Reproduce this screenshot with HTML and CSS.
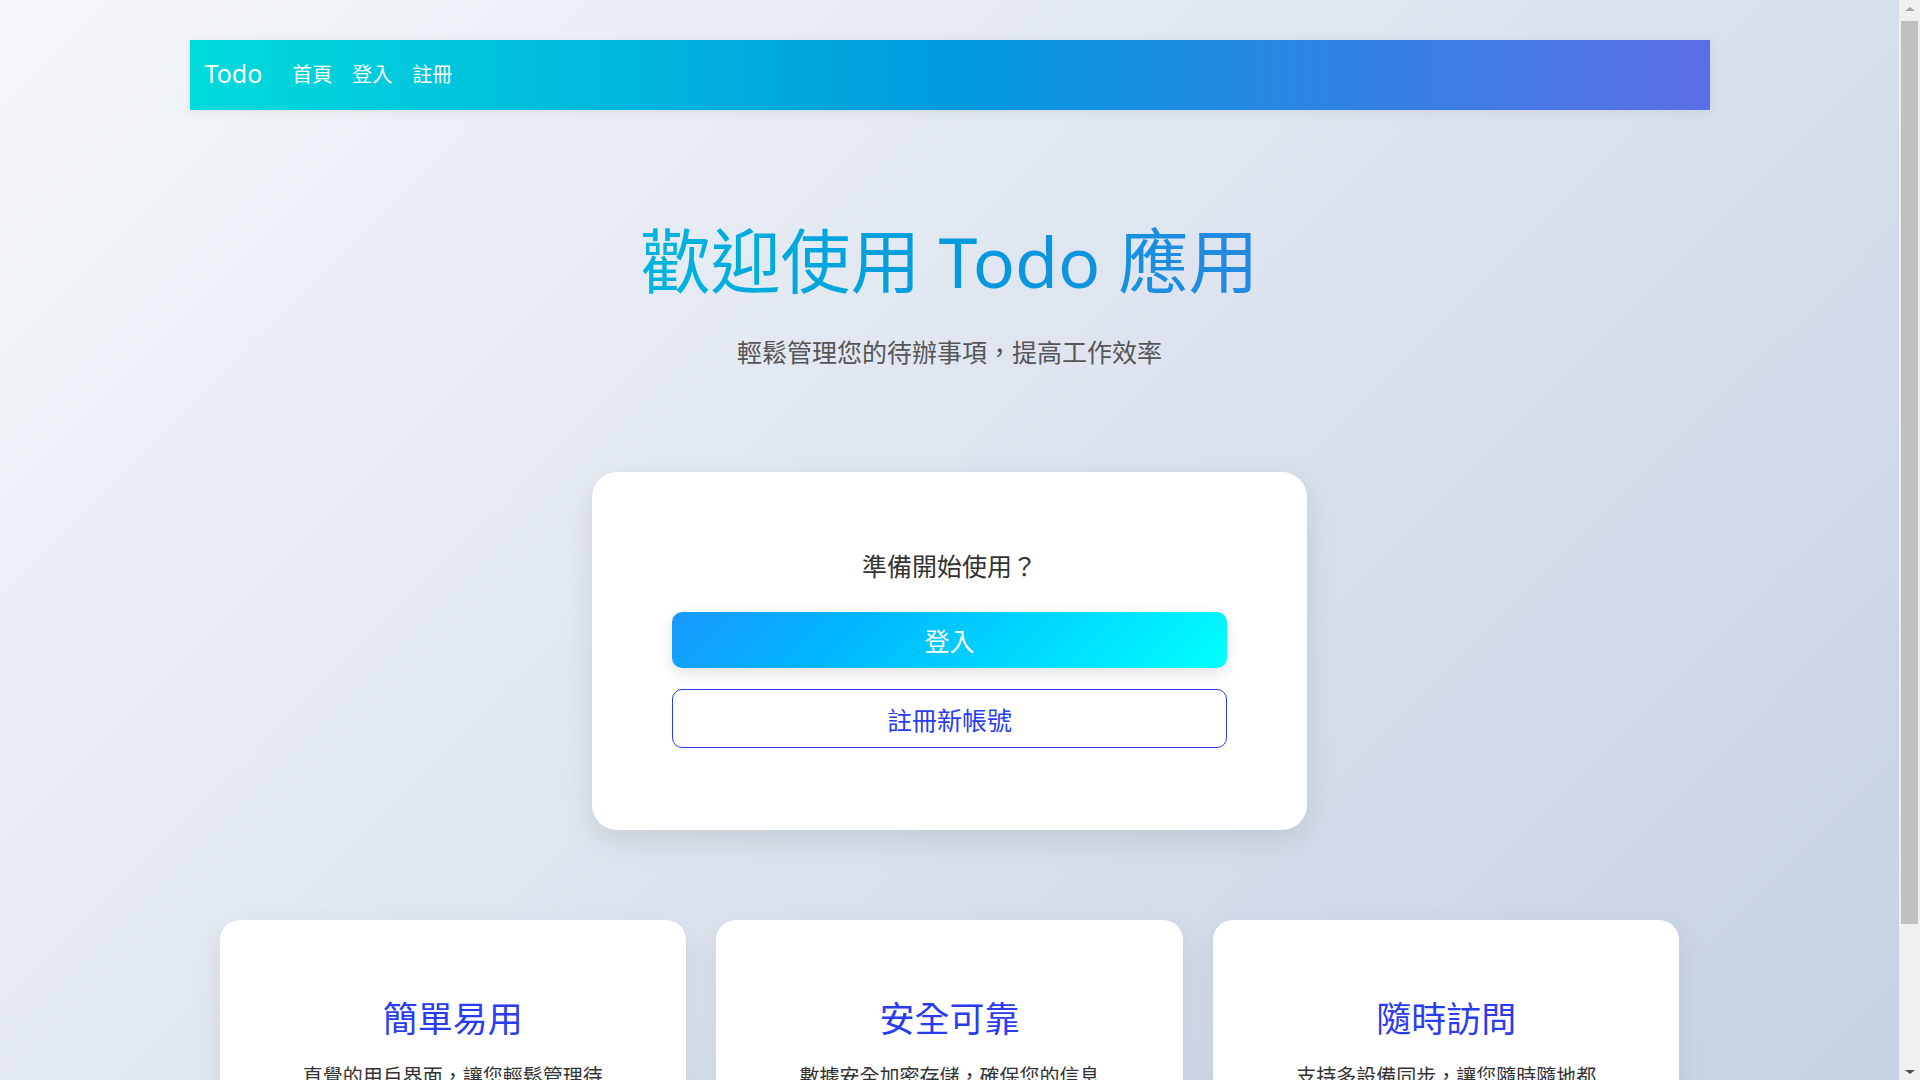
FILE: index.html
```html
<!DOCTYPE html>
<html lang="zh-Hant">
<head>
<meta charset="utf-8">
<title>Todo</title>
<link rel="stylesheet" href="styles.css">
</head>
<body>
<div class="container">
  <nav class="navbar">
    <a class="brand" href="#">Todo</a>
    <a class="nav-link" href="#">首頁</a>
    <a class="nav-link" href="#">登入</a>
    <a class="nav-link" href="#">註冊</a>
  </nav>

  <section class="hero">
    <h1 class="hero-title">歡迎使用 Todo 應用</h1>
    <p class="hero-lead">輕鬆管理您的待辦事項，提高工作效率</p>
  </section>

  <section class="cta-card">
    <p class="cta-text">準備開始使用？</p>
    <a class="btn btn-primary" href="#">登入</a>
    <a class="btn btn-outline" href="#">註冊新帳號</a>
  </section>

  <section class="features">
    <div class="feature-card">
      <h3 class="feature-title">簡單易用</h3>
      <p class="feature-text">直覺的用戶界面，讓您輕鬆管理待辦事項</p>
    </div>
    <div class="feature-card">
      <h3 class="feature-title">安全可靠</h3>
      <p class="feature-text">數據安全加密存儲，確保您的信息安全</p>
    </div>
    <div class="feature-card">
      <h3 class="feature-title">隨時訪問</h3>
      <p class="feature-text">支持多設備同步，讓您隨時隨地都能訪問</p>
    </div>
  </section>
</div>

<div class="scrollbar" aria-hidden="true">
  <span class="sb-arrow sb-up"></span>
  <span class="sb-track"><span class="sb-thumb"></span></span>
  <span class="sb-arrow sb-down"></span>
</div>
</body>
</html>
```

FILE: styles.css
```css
html {
  background: #c3cfe2;
}

html::-webkit-scrollbar {
  display: none;
}

body {
  margin: 0 21px 0 0;
  min-height: 100vh;
  background: linear-gradient(135deg, #f5f7fa 0%, #c3cfe2 100%);
  font-family: "Noto Sans", "Noto Sans CJK TC", sans-serif;
  color: #333;
}

.container {
  width: 1520px;
  margin: 0 auto;
  padding: 40px 0 50px;
}

.navbar {
  box-sizing: border-box;
  height: 70px;
  display: flex;
  align-items: center;
  padding: 0 15px 4px;
  background: linear-gradient(90deg, #00dbdc 0%, #009bde 50%, #5c6de6 100%);
  box-shadow: 0 2px 10px rgba(0, 0, 0, 0.08);
}

.brand {
  color: #fff;
  text-decoration: none;
  font-size: 25px;
  margin-right: 20px;
}

.nav-link {
  color: #fff;
  text-decoration: none;
  font-size: 20px;
  padding: 0 10px;
}

.hero {
  text-align: center;
  padding-top: 109px;
}

.hero-title {
  margin: 0;
  font-size: 70px;
  line-height: 84px;
  font-weight: 400;
  background: linear-gradient(90deg, #00dbdc 0%, #009bde 50%, #5c6de6 100%);
  -webkit-background-clip: text;
  background-clip: text;
  color: transparent;
}

.hero-lead {
  margin: 30px 0 0;
  font-size: 25px;
  line-height: 39px;
  color: #555;
}

.cta-card {
  width: 555px;
  margin: 100px auto 0;
  padding: 80px 80px 82px;
  background: #fff;
  border-radius: 25px;
  box-shadow: 0 10px 30px rgba(0, 0, 0, 0.1);
  display: flex;
  flex-direction: column;
  align-items: stretch;
  text-align: center;
}

.cta-text {
  margin: 0 0 31px;
  font-size: 25px;
  line-height: 29px;
  color: #333;
}

.btn {
  display: flex;
  align-items: center;
  justify-content: center;
  box-sizing: border-box;
  border-radius: 10px;
  font-size: 25px;
  text-decoration: none;
}

.btn-primary {
  height: 56px;
  color: #fff;
  background: linear-gradient(135deg, #1a98ff 0%, #00b4ff 30%, #00ffff 100%);
  box-shadow: 0 5px 15px rgba(0, 0, 0, 0.12);
}

.btn-outline {
  height: 59px;
  margin-top: 21px;
  color: #2a3cf2;
  background: #fff;
  border: 1.5px solid #2a3cf2;
}

.features {
  display: grid;
  grid-template-columns: repeat(3, 1fr);
  gap: 30px;
  padding: 0 30px;
  margin-top: 90px;
}

.feature-card {
  background: #fff;
  border-radius: 20px;
  box-shadow: 0 10px 30px rgba(0, 0, 0, 0.08);
  padding: 78px;
  text-align: center;
}

.feature-title {
  margin: 0 0 23px;
  font-size: 35px;
  line-height: 41px;
  font-weight: 400;
  color: #2a3cf2;
}

.feature-text {
  margin: 0;
  font-size: 20px;
  line-height: 30px;
  color: #333;
}

/* browser scrollbar as it appears in the screenshot */
.scrollbar {
  position: fixed;
  top: 0;
  right: 0;
  width: 21px;
  height: 100vh;
  background: #f0f0f0;
  display: flex;
  flex-direction: column;
  align-items: center;
}

.sb-arrow {
  flex: 0 0 17px;
  width: 21px;
  display: flex;
  align-items: center;
  justify-content: center;
}

.sb-arrow::before {
  content: "";
  width: 0;
  height: 0;
  border-left: 5px solid transparent;
  border-right: 5px solid transparent;
}

.sb-up::before {
  border-bottom: 4px solid #a3a3a3;
}

.sb-down::before {
  border-top: 4px solid #505050;
}

.sb-track {
  flex: 1;
  width: 21px;
  padding-top: 4px;
  box-sizing: border-box;
}

.sb-thumb {
  display: block;
  height: 903px;
  margin: 0 2px;
  background: #c0c0c0;
}
```
